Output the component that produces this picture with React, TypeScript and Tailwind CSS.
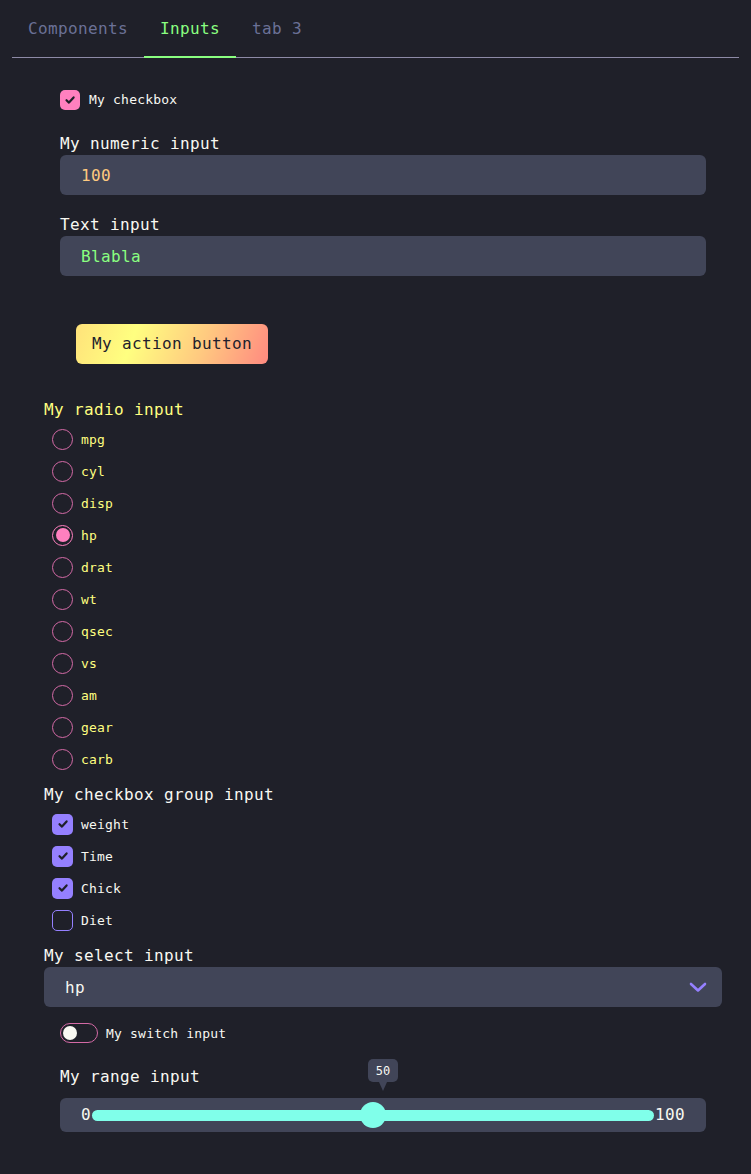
import React from "react";

const mono = { fontFamily: '"DejaVu Sans Mono", "Liberation Mono", monospace' };

function Check({ color = "#1f2029" }: { color?: string }) {
  return (
    <svg width="12" height="12" viewBox="0 0 12 12" fill="none">
      <path d="M2.5 6.2 L5 8.6 L9.6 3.4" stroke={color} strokeWidth="2.2" strokeLinecap="round" strokeLinejoin="round" />
    </svg>
  );
}

const radios = ["mpg", "cyl", "disp", "hp", "drat", "wt", "qsec", "vs", "am", "gear", "carb"];
const checks: [string, boolean][] = [
  ["weight", true],
  ["Time", true],
  ["Chick", true],
  ["Diet", false],
];

export default function App() {
  return (
    <div className="min-h-[1174px] w-full bg-[#1f2029] text-[#f8f8f2]" style={mono}>
      <div className="px-[12px]">
        <div className="flex h-[58px] border-b border-[#8d8aa6]">
          <div className="flex items-center px-[16px] pt-px text-[16px] tracking-[0.37px] text-[#6b7196]">Components</div>
          <div className="flex items-center px-[16px] pt-px text-[16px] tracking-[0.37px] text-[#8aff80] border-b-2 border-[#8aff80] -mb-px">Inputs</div>
          <div className="flex items-center px-[16px] pt-px text-[16px] tracking-[0.37px] text-[#6b7196]">tab 3</div>
        </div>
      </div>

      <div className="pl-[44px] pr-[29px]">
        <div className="px-[16px]">
          <div className="mt-[32px] flex h-[20px] items-center gap-[9px]">
            <div className="flex h-[20px] w-[20px] items-center justify-center rounded-[5px] bg-[#ff80bf]">
              <Check />
            </div>
            <span className="text-[13px] tracking-[0.2px]">My checkbox</span>
          </div>

          <div className="mt-[21px] h-[24px] leading-[25px] text-[16px] tracking-[0.37px]">My numeric input</div>
          <div className="flex h-[40px] items-center rounded-[6px] bg-[#414558] px-[21px] pt-px text-[16px] tracking-[0.37px] text-[#ffca80]">100</div>

          <div className="mt-[17px] h-[24px] leading-[25px] text-[16px] tracking-[0.37px]">Text input</div>
          <div className="flex h-[40px] items-center rounded-[6px] bg-[#414558] px-[21px] pt-px text-[16px] tracking-[0.37px] text-[#8aff80]">Blabla</div>

          <div className="mt-[48px] px-[16px]">
            <div className="inline-flex h-[40px] items-center rounded-[6px] bg-[linear-gradient(110deg,#ffe27a_0%,#ffff80_30%,#ffca80_65%,#ff8a80_100%)] px-[16px] text-[16px] tracking-[0.37px] text-[#22212c]">
              My action button
            </div>
          </div>
        </div>

        <div className="mt-[33px] h-[24px] leading-[25px] text-[16px] tracking-[0.37px] text-[#ffff80]">My radio input</div>
        <div className="mt-[2px] flex flex-col">
          {radios.map((r) => (
            <div key={r} className="flex h-[32px] items-center gap-[8px] pl-[8px]">
              {r === "hp" ? (
                <div className="flex h-[21px] w-[21px] items-center justify-center rounded-full border-[1.5px] border-[#ff80bf]">
                  <div className="h-[14px] w-[14px] rounded-full bg-[#ff80bf]" />
                </div>
              ) : (
                <div className="h-[21px] w-[21px] rounded-full border-[1.5px] border-[#d46aa6]" />
              )}
              <span className="pt-px text-[13px] tracking-[0.2px] text-[#ffff80]">{r}</span>
            </div>
          ))}
        </div>

        <div className="mt-[7px] h-[24px] leading-[25px] text-[16px] tracking-[0.37px]">My checkbox group input</div>
        <div className="mt-[2px] flex flex-col">
          {checks.map(([c, on]) => (
            <div key={c} className="flex h-[32px] items-center gap-[8px] pl-[8px]">
              {on ? (
                <div className="flex h-[21px] w-[21px] items-center justify-center rounded-[5px] bg-[#9580ff]">
                  <Check />
                </div>
              ) : (
                <div className="h-[21px] w-[21px] rounded-[5px] border-[1.5px] border-[#9580ff]" />
              )}
              <span className="pt-px text-[13px] tracking-[0.2px]">{c}</span>
            </div>
          ))}
        </div>

        <div className="mt-[7px] h-[24px] leading-[25px] text-[16px] tracking-[0.37px]">My select input</div>
        <div className="flex h-[40px] items-center justify-between rounded-[6px] bg-[#414558] pl-[21px] pr-[15px] text-[16px] tracking-[0.37px]">
          <span className="pt-px">hp</span>
          <svg width="18" height="12" viewBox="0 0 18 12" fill="none">
            <path d="M2 3 L9 9.5 L16 3" stroke="#9580ff" strokeWidth="2.6" strokeLinecap="round" strokeLinejoin="round" />
          </svg>
        </div>

        <div className="px-[16px]">
          <div className="mt-[16px] flex h-[20px] items-center gap-[8px]">
            <div className="flex h-[20px] w-[38px] items-center rounded-full border-[1.5px] border-[#d46aa6] px-[2px]">
              <div className="h-[14px] w-[14px] rounded-full bg-[#f8f8f2]" />
            </div>
            <span className="pt-px text-[13px] tracking-[0.2px]">My switch input</span>
          </div>

          <div className="relative mt-[21px] h-[24px] leading-[25px] text-[16px] tracking-[0.37px]">
            My range input
            <div className="absolute left-[308px] top-[-5px] flex flex-col items-center">
              <div className="flex h-[23px] w-[30px] items-center justify-center rounded-[5px] bg-[#414558] text-[12px] tracking-normal leading-none">50</div>
              <div className="h-0 w-0 border-x-[4px] border-t-[9px] border-x-transparent border-t-[#414558]" />
            </div>
          </div>
          <div className="mt-[10px] flex h-[34px] items-center rounded-[6px] bg-[#414558] pl-[21px] pr-[21px] text-[16px] tracking-[0.37px]">
            <span>0</span>
            <div className="relative mx-[1px] flex h-[11px] flex-1 items-center rounded-full bg-[#80ffea]">
              <div className="absolute left-[268px] h-[26px] w-[26px] rounded-full bg-[#80ffea]" />
            </div>
            <span>100</span>
          </div>
        </div>
      </div>
    </div>
  );
}
